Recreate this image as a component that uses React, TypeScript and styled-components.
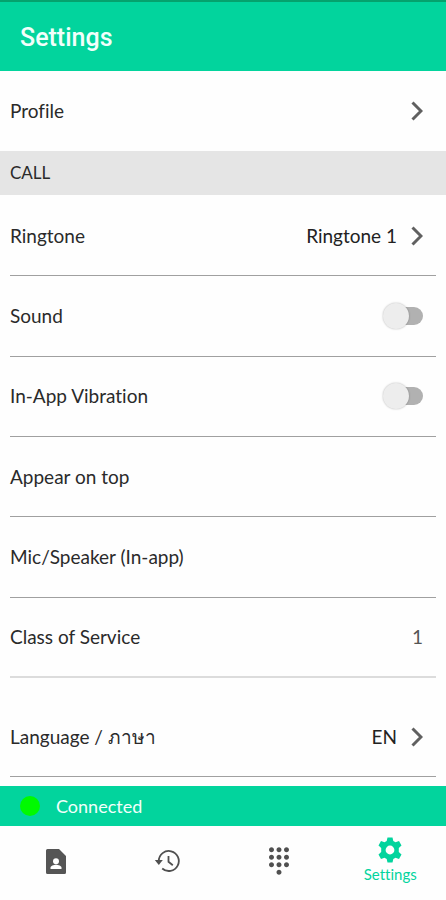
import React, { useState } from "react";
import styled, { createGlobalStyle, css } from "styled-components";
import { MdDialpad } from "react-icons/md";

const GREEN = "#02d49d";

const GlobalStyle = createGlobalStyle`
  *, *::before, *::after { box-sizing: border-box; }
  body {
    margin: 0;
    background: #fefefe;
    color: #2a2a2a;
    font-family: Lato, "Noto Sans", sans-serif;
    font-size: 19px;
    font-variant-ligatures: none;
    line-height: 24px;
  }
  button { font: inherit; color: inherit; background: none; border: 0; padding: 0; cursor: pointer; }
`;

const Page = styled.div`
  display: flex;
  flex-direction: column;
  min-height: 100vh;
`;

const Header = styled.header`
  border-top: 2px solid #05a26d;
  background: ${GREEN};
  padding: 20px 20px 17px;
`;

const Title = styled.h1`
  margin: 0;
  color: #f2fffb;
  font-family: Roboto, sans-serif;
  font-size: 25px;
  font-weight: 500;
  line-height: 32px;
`;

const Main = styled.main`
  flex: 1;
  display: flex;
  flex-direction: column;
`;

const SectionTitle = styled.h2`
  margin: 0;
  padding: 10px;
  background: #e5e5e5;
  font-size: 17px;
  font-weight: 400;
  line-height: 24px;
`;

const Group = styled.div`
  flex: 1;
  display: grid;
  grid-auto-rows: 1fr;
  padding: 1px 10px 0;
`;

const LanguageGroup = styled.div`
  padding: 19px 10px 9px;
`;

const ProfileGroup = styled.div`
  padding: 0 10px;
`;

type Line = "none" | "dark" | "light";

const rowStyle = css<{ $line?: Line }>`
  display: flex;
  align-items: center;
  justify-content: space-between;
  width: 100%;
  min-height: 80px;
  text-align: left;
  && {
    padding-right: 13px;
    border-bottom: ${({ $line = "dark" }) =>
      $line === "none" ? "0" : $line === "light" ? "2px solid #dcdcdc" : "1px solid #a0a0a0"};
  }
`;

const RowButton = styled.button<{ $line?: Line }>`${rowStyle}`;
const RowLabel = styled.label<{ $line?: Line }>`${rowStyle}`;
const RowInfo = styled.div<{ $line?: Line }>`${rowStyle}`;

const Value = styled.span<{ $muted?: boolean }>`
  display: flex;
  align-items: center;
  gap: 14px;
  color: ${({ $muted }) => ($muted ? "#555" : "#222")};
`;

const Switch = styled.input`
  appearance: none;
  display: flex;
  align-items: center;
  width: 38px;
  height: 18px;
  margin: 0;
  border-radius: 9px;
  background: #b1b1b1;
  cursor: pointer;

  &::before {
    content: "";
    flex: none;
    width: 26px;
    height: 26px;
    margin-left: -2px;
    border-radius: 50%;
    background: #ededed;
    box-shadow: 0 0 2px rgba(0, 0, 0, 0.3);
  }
  &:checked { background: #8be5cb; }
  &:checked::before { margin-left: 14px; background: ${GREEN}; }
`;

const StatusBar = styled.div`
  display: flex;
  align-items: center;
  gap: 16px;
  padding: 8px 20px;
  background: ${GREEN};
  color: #f2fffb;
  font-size: 18px;
`;

const StatusDot = styled.span`
  width: 20px;
  height: 20px;
  border-radius: 50%;
  background: #00fa00;
`;

const Nav = styled.nav`
  display: grid;
  grid-template-columns: repeat(4, 1fr);
  min-height: 74px;
`;

const NavButton = styled.button<{ $active?: boolean }>`
  display: flex;
  flex-direction: column;
  align-items: center;
  justify-content: center;
  && {
    padding-bottom: 4px;
    color: ${({ $active }) => ($active ? GREEN : "#505050")};
    font-size: 15px;
    line-height: 22px;
  }
`;

function Chevron() {
  return (
    <svg width="12" height="20" viewBox="0 0 12 20" fill="none" stroke="#606060" strokeWidth="3" aria-hidden="true">
      <path d="M1.500 1.500 10 10l-8.500 8.500" />
    </svg>
  );
}

function ContactIcon() {
  return (
    <svg width="20" height="25" viewBox="0 0 20 25" aria-hidden="true">
      <path
        d="M1.500 0H13l7 7v16.500a1.500 1.500 0 0 1-1.500 1.500h-17A1.500 1.500 0 0 1 0 23.500v-22A1.500 1.500 0 0 1 1.500 0z"
        fill="#555"
      />
      <circle cx="10" cy="12.200" r="3" fill="#fff" />
      <path d="M4.500 20v-1.300c0-2 3.200-3 5.500-3s5.500 1 5.500 3V20z" fill="#fff" />
    </svg>
  );
}

function HistoryIcon() {
  return (
    <svg width="26" height="24" viewBox="0 0 26 24" fill="none" stroke="currentColor" strokeWidth="1.800" aria-hidden="true">
      <path d="M4.800 13V12a10 10 0 1 1 3.400 7.500" />
      <path d="M14.500 7v5.800l4.300 3.400" />
      <path d="M.8 11h8l-4 5z" fill="currentColor" stroke="none" />
    </svg>
  );
}

function GearIcon() {
  return (
    <svg width="24" height="26" viewBox="-12 -13 24 26" fill="currentColor" aria-hidden="true">
      <path
        fillRule="evenodd"
        d="M-2.500-12.500h5l.8 3.400 2.200 1.300 3.500-1.100 2.500 4.300-2.700 2.700v3.800l2.700 2.700L9 8.900 5.500 7.800 3.300 9.100l-.8 3.400h-5l-.8-3.400-2.200-1.300L-9 8.900l-2.500-4.300 2.700-2.700v-3.800l-2.700-2.700L-9-8.900l3.500 1.100 2.200-1.300zM0-4.400a4.400 4.400 0 1 0 0 8.800 4.400 4.400 0 0 0 0-8.800z"
      />
    </svg>
  );
}

function SwitchRow({ label }: { label: string }) {
  const [on, setOn] = useState(false);
  return (
    <RowLabel>
      {label}
      <Switch type="checkbox" role="switch" checked={on} onChange={(e) => setOn(e.target.checked)} />
    </RowLabel>
  );
}

export default function App() {
  return (
    <Page>
      <GlobalStyle />
      <Header>
        <Title>Settings</Title>
      </Header>
      <Main>
        <ProfileGroup>
          <RowButton $line="none">
            Profile
            <Chevron />
          </RowButton>
        </ProfileGroup>
        <SectionTitle>CALL</SectionTitle>
        <Group>
          <RowButton>
            Ringtone
            <Value>
              Ringtone 1<Chevron />
            </Value>
          </RowButton>
          <SwitchRow label="Sound" />
          <SwitchRow label="In-App Vibration" />
          <RowButton>Appear on top</RowButton>
          <RowButton>Mic/Speaker (In-app)</RowButton>
          <RowInfo $line="light">
            <span>Class of Service</span>
            <Value $muted>1</Value>
          </RowInfo>
        </Group>
        <LanguageGroup>
          <RowButton>
            Language / ภาษา
            <Value>
              EN
              <Chevron />
            </Value>
          </RowButton>
        </LanguageGroup>
      </Main>
      <StatusBar role="status">
        <StatusDot />
        Connected
      </StatusBar>
      <Nav aria-label="Main">
        <NavButton aria-label="Contacts">
          <ContactIcon />
        </NavButton>
        <NavButton aria-label="History">
          <HistoryIcon />
        </NavButton>
        <NavButton aria-label="Dialpad">
          <MdDialpad size={30} />
        </NavButton>
        <NavButton $active aria-current="page">
          <GearIcon />
          Settings
        </NavButton>
      </Nav>
    </Page>
  );
}
